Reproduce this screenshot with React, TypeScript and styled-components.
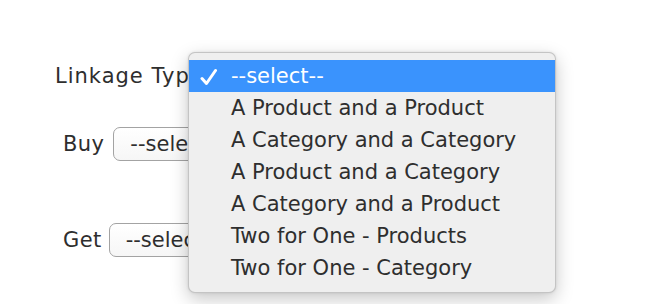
import React from "react";
import styled, { createGlobalStyle } from "styled-components";

const Global = createGlobalStyle`
  html, body { margin: 0; padding: 0; background: #ffffff; }
  body { font-family: "DejaVu Sans", Verdana, sans-serif; color: #2e2e2e; }
`;

const Page = styled.div`
  position: relative;
  width: 670px;
  height: 304px;
  overflow: hidden;
  background: #fff;
`;

const Form = styled.div`
  display: flex;
  flex-direction: column;
  padding-top: 59px;
`;

const Row = styled.div<{ $indent: number; $gap: number; $top: number }>`
  display: flex;
  align-items: center;
  gap: ${(p) => p.$gap}px;
  padding-left: ${(p) => p.$indent}px;
  margin-top: ${(p) => p.$top}px;
  height: 34px;
`;

const Label = styled.span<{ $spacing?: number }>`
  font-size: 21px;
  letter-spacing: ${(p) => p.$spacing ?? 0.4}px;
  color: #2e2e2e;
  white-space: nowrap;
`;

const SelectBox = styled.div`
  box-sizing: border-box;
  height: 34px;
  width: 180px;
  border: 1px solid #a3a3a3;
  border-radius: 7px;
  background: linear-gradient(#ffffff, #f6f6f6);
  padding-left: 16px;
  display: flex;
  align-items: center;
  font-size: 21px;
  color: #2e2e2e;
`;

const Menu = styled.ul`
  position: absolute;
  left: 188px;
  top: 52px;
  width: 368px;
  box-sizing: border-box;
  margin: 0;
  padding: 7px 0 8px;
  list-style: none;
  background: #efefef;
  border: 1px solid rgba(0, 0, 0, 0.18);
  border-radius: 7px;
  box-shadow: 0 6px 18px rgba(0, 0, 0, 0.22), 0 0 3px rgba(0, 0, 0, 0.1);
`;

const Item = styled.li<{ $active?: boolean }>`
  position: relative;
  height: 32px;
  display: flex;
  align-items: center;
  padding-left: 42px;
  font-size: 21px;
  color: ${(p) => (p.$active ? "#ffffff" : "#2e2e2e")};
  background: ${(p) => (p.$active ? "#3a93fd" : "transparent")};
  white-space: nowrap;
`;

const Check = styled.svg`
  position: absolute;
  left: 11px;
  top: 8px;
`;

const options = [
  "--select--",
  "A Product and a Product",
  "A Category and a Category",
  "A Product and a Category",
  "A Category and a Product",
  "Two for One - Products",
  "Two for One - Category",
];

export default function App() {
  return (
    <Page>
      <Global />
      <Form>
        <Row $indent={55} $gap={8} $top={0}>
          <Label $spacing={1}>Linkage Type</Label>
        </Row>
        <Row $indent={63} $gap={9} $top={34}>
          <Label>Buy</Label>
          <SelectBox>--select--</SelectBox>
        </Row>
        <Row $indent={63} $gap={7} $top={62}>
          <Label>Get</Label>
          <SelectBox>--select--</SelectBox>
        </Row>
      </Form>
      <Menu>
        {options.map((o, i) => (
          <Item key={o} $active={i === 0}>
            {i === 0 && (
              <Check width="18" height="18" viewBox="0 0 18 18">
                <path
                  d="M2 10.5 L6.5 15.5 L15.5 2.5"
                  fill="none"
                  stroke="#ffffff"
                  strokeWidth="3"
                  strokeLinecap="round"
                  strokeLinejoin="round"
                />
              </Check>
            )}
            {o}
          </Item>
        ))}
      </Menu>
    </Page>
  );
}
